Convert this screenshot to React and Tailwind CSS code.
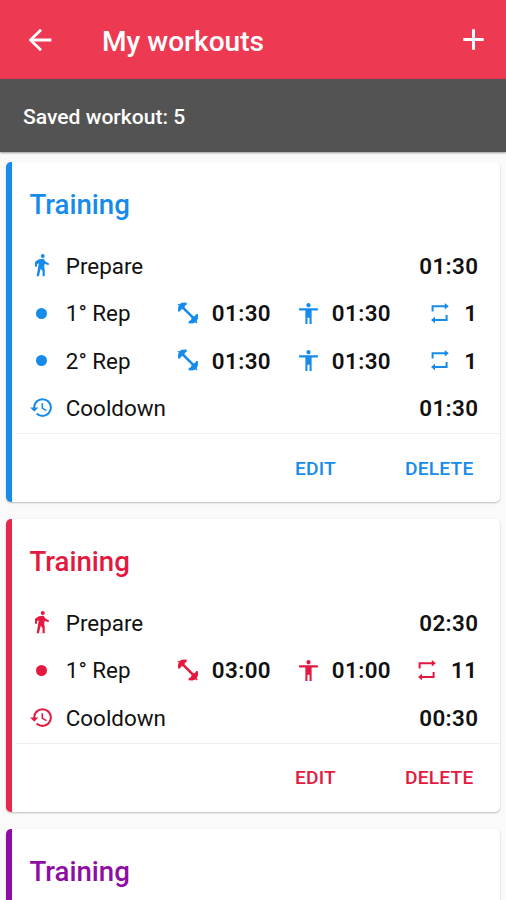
import { MdAccessibility, MdAdd, MdArrowBack, MdHistory } from "react-icons/md";

const workouts = [
    {
        id: 1,
        name: "Training",
        text: "text-[#168bea]",
        border: "bg-[#168bea]",
        details: {
            prepare: "01:30",
            reps: [
                { work: "01:30", rest: "01:30", rounds: 1 },
                { work: "01:30", rest: "01:30", rounds: 1 },
            ],
            cooldown: "01:30",
        },
    },
    {
        id: 2,
        name: "Training",
        text: "text-[#e3193f]",
        border: "bg-[#e8284a]",
        details: {
            prepare: "02:30",
            reps: [{ work: "03:00", rest: "01:00", rounds: 11 }],
            cooldown: "00:30",
        },
    },
    {
        id: 3,
        name: "Training",
        text: "text-[#8e0da5]",
        border: "bg-[#8e0da5]",
    },
];

const WalkIcon = () => (
    <svg width="25" height="25" viewBox="0 0 24 24" fill="currentColor" className="shrink-0">
        <circle cx="13.2" cy="2.9" r="1.9" />
        <path d="M9.5 6.1 13.9 5.5 15.8 8.2 19.2 10 18.8 11.8 15 10.4 14.6 13.4 15.1 16V22.4H13V17.2L11.2 15.2 9.5 22.4H7.3L9.4 9.9 7.7 10.7V13.2H5.8V8.5Z" />
    </svg>
);

const BarbellIcon = () => (
    <svg width="22" height="22" viewBox="0 0 22 22" fill="currentColor">
        <path d="M.9 1.5 2 2.4 4.6.8 9.6.6 9.8 2.6 7.8 4 7.6 5.5 16.4 14.2 18 14 19.2 12 21 12.2 20.9 16.4 19.6 19.6 20.6 20.6 19.8 21.4 18.6 20.5 15.4 21.4 11.4 21.2 11.8 19.3 14 18 14.6 16 5.8 7.3 4.2 7.6 3 9.6 1 9.4 1.1 5.4 1.8 3.6.5 2.6Z" />
    </svg>
);

const RepeatIcon = () => (
    <svg width="20" height="22" viewBox="0 0 20 22" fill="none" stroke="currentColor" strokeWidth="2">
        <path d="M2.6 9.4V4.2H16M16.6 13v5H4" />
        <path d="M14.8 1 18.8 4.2 14.8 7.4ZM5 14.8 1 18 5 21.2Z" fill="currentColor" stroke="none" />
    </svg>
);

const TimeRow = ({ icon, label, time, color }) => (
    <div className="flex h-[47.4px] items-center">
        <span className={`flex w-6 justify-center ${color}`}>{icon}</span>
        <span className="ml-3 flex-1 pt-[2px]">{label}</span>
        <span className="pt-[2px] font-semibold tracking-[0.4px]">{time}</span>
    </div>
);

const RepRow = ({ index, rep, color }) => (
    <div className="flex h-[47.4px] items-center">
        <span className="flex w-6 justify-center">
            <span className={`size-[11px] rounded-full bg-current ${color}`} />
        </span>
        <span className="ml-3 w-[111px] pt-[2px]">{index}° Rep</span>
        <span className={color}>
            <BarbellIcon />
        </span>
        <span className="ml-[13px] w-[84px] pt-[2px] font-semibold tracking-[0.4px]">{rep.work}</span>
        <MdAccessibility className={`size-[25px] shrink-0 ${color}`} />
        <span className="ml-[11px] pt-[2px] font-semibold tracking-[0.4px]">{rep.rest}</span>
        <span className={`ml-auto ${color}`}>
            <RepeatIcon />
        </span>
        <span className="mr-[1px] ml-[14px] pt-[2px] font-semibold tracking-[0.4px]">{rep.rounds}</span>
    </div>
);

const WorkoutDetails = ({ details, color }) => (
    <>
        <div className="pr-[21.5px] pb-[1.4px] pl-[17.4px] text-[22.4px] text-[#111]">
            <TimeRow icon={<WalkIcon />} label="Prepare" time={details.prepare} color={color} />
            {details.reps.map((rep, index) => (
                <RepRow key={index} index={index + 1} rep={rep} color={color} />
            ))}
            <TimeRow
                icon={<MdHistory className="size-[25px] shrink-0" />}
                label="Cooldown"
                time={details.cooldown}
                color={color}
            />
        </div>
        <div
            className={`ml-1 flex h-[69px] items-center justify-end gap-[69px] border-t border-[#efefef] pt-[2px] pr-[26.5px] text-[19.2px] font-medium tracking-[0.2px] ${color}`}
        >
            <button type="button">EDIT</button>
            <button type="button">DELETE</button>
        </div>
    </>
);

const WorkoutCard = ({ workout }) => (
    <div className="flex min-h-24 shrink-0 overflow-hidden rounded-[5px] bg-white shadow-[0_1px_2px_rgba(0,0,0,0.25)]">
        <div className={`w-[6px] shrink-0 ${workout.border}`} />
        <div className="min-w-0 flex-1">
            <h2 className={`flex h-20 items-center pt-[5.5px] pl-[17px] text-[27.6px] font-medium ${workout.text}`}>
                {workout.name}
            </h2>
            {workout.details && <WorkoutDetails details={workout.details} color={workout.text} />}
        </div>
    </div>
);

export default function App() {
    return (
        <div className="flex h-[900px] w-[506px] flex-col overflow-hidden bg-[#fafafa] font-[Roboto,sans-serif]">
            <header className="z-10 flex h-[79px] shrink-0 items-center bg-[#ed3a52] pr-[15px] pl-[23px] text-white shadow-[0_1px_2px_#2f4450]">
                <MdArrowBack className="size-[34px]" />
                <h1 className="ml-[45px] flex-1 pt-[5px] text-[28.1px] font-medium">My workouts</h1>
                <MdAdd className="size-[35px]" />
            </header>
            <div className="z-10 flex h-[73px] shrink-0 items-center bg-[#535353] pt-[3px] pl-[23px] text-[21.1px] font-medium text-white shadow-[0_1px_2px_rgba(0,0,0,0.4)]">
                Saved workout: 5
            </div>
            <main className="flex flex-col gap-[17px] pt-[10px] pr-[6px] pl-[6.4px]">
                {workouts.map((workout) => (
                    <WorkoutCard key={workout.id} workout={workout} />
                ))}
            </main>
        </div>
    );
}
